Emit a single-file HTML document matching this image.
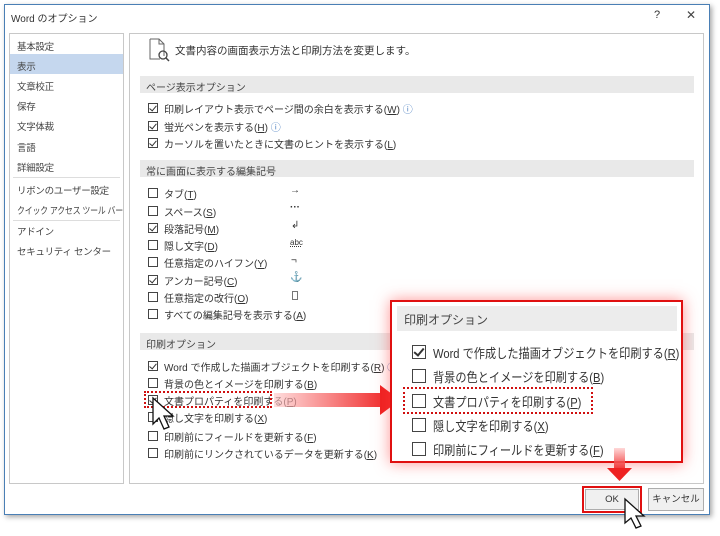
<!DOCTYPE html>
<html><head><meta charset="utf-8"><style>
*{margin:0;padding:0;box-sizing:border-box}
body{width:720px;height:536px;background:#fff;position:relative;overflow:hidden;font-family:"Liberation Sans","Noto Sans CJK JP",sans-serif;color:#333;font-size:10px}
.a{position:absolute;white-space:nowrap}
.dlg{left:4px;top:4px;width:706px;height:511px;border:1px solid #4a7fb5;background:#fff;box-shadow:2px 2px 5px rgba(0,0,0,.35)}
.pane{border:1px solid #c8c8c8;background:#fff}
.hdr{background:#e9e9e9;left:140px;width:554px;height:17px;padding:3px 0 0 6px;font-size:10px;color:#444}
.cb{width:10px;height:10px;border:1px solid #444;background:#fff}
.ck::after{content:"";position:absolute;left:2px;top:0px;width:3px;height:6px;border:solid #333;border-width:0 1.5px 1.5px 0;transform:rotate(40deg)}
.nav{left:17px;font-size:9.5px;letter-spacing:-0.3px;color:#444}
.big .cb{width:14px;height:14px;border:1.5px solid #444}
.big .ck::after{left:3px;top:0;width:4px;height:8px;border-width:0 2px 2px 0}
.bt{height:23px;border:1px solid #adadad;background:#f0f0f0;text-align:center;font-size:9.5px;line-height:21px}
.bx{font-size:13px;transform:scaleX(.86);transform-origin:left top}
</style></head><body>
<div class="a dlg"></div>
<div class="a" style="left:11px;top:10px;font-size:10px">Word のオプション</div>
<div class="a" style="left:654px;top:9px;font-size:11px">?</div>
<div class="a" style="left:686px;top:8px;font-size:12px;color:#444">✕</div>
<div class="a pane" style="left:9px;top:33px;width:115px;height:451px"></div>
<div class="a" style="left:10px;top:54px;width:113px;height:20px;background:#c5d7ee"></div>
<div class="a nav" style="top:39px">基本設定</div>
<div class="a nav" style="top:59px">表示</div>
<div class="a nav" style="top:79px">文章校正</div>
<div class="a nav" style="top:99px">保存</div>
<div class="a nav" style="top:119px">文字体裁</div>
<div class="a nav" style="top:140px">言語</div>
<div class="a nav" style="top:160px">詳細設定</div>
<div class="a" style="left:13px;top:177px;width:107px;height:1px;background:#ddd"></div>
<div class="a nav" style="top:183px">リボンのユーザー設定</div>
<div class="a nav" style="top:203px;transform:scaleX(.84);transform-origin:left top">クイック アクセス ツール バー</div>
<div class="a" style="left:13px;top:220px;width:107px;height:1px;background:#ddd"></div>
<div class="a nav" style="top:224px">アドイン</div>
<div class="a nav" style="top:244px">セキュリティ センター</div>
<div class="a pane" style="left:129px;top:33px;width:575px;height:451px"></div>
<svg class="a" style="left:148px;top:38px" width="22" height="24"><path d="M2 1h9l5 5v12M2 1v20h10M11 1v5h5" fill="none" stroke="#666"/><circle cx="15" cy="17" r="4" fill="none" stroke="#444" stroke-width="1.3"/><path d="M18 20l3 3" stroke="#444" stroke-width="1.5"/></svg>
<div class="a" style="left:175px;top:43px;font-size:10.5px">文書内容の画面表示方法と印刷方法を変更します。</div>

<div class="a hdr" style="top:76px">ページ表示オプション</div>
<div class="a cb ck" style="left:148px;top:103px"></div><div class="a" style="left:164px;top:101px">印刷レイアウト表示でページ間の余白を表示する(<u>W</u>) <span style="color:#4a7fc0">ⓘ</span></div>
<div class="a cb ck" style="left:148px;top:121px"></div><div class="a" style="left:164px;top:119px">蛍光ペンを表示する(<u>H</u>) <span style="color:#4a7fc0">ⓘ</span></div>
<div class="a cb ck" style="left:148px;top:138px"></div><div class="a" style="left:164px;top:136px">カーソルを置いたときに文書のヒントを表示する(<u>L</u>)</div>

<div class="a hdr" style="top:160px">常に画面に表示する編集記号</div>
<div class="a cb" style="left:148px;top:188px"></div><div class="a" style="left:164px;top:186px">タブ(<u>T</u>)</div><div class="a" style="left:290px;top:185px">→</div>
<div class="a cb" style="left:148px;top:206px"></div><div class="a" style="left:164px;top:204px">スペース(<u>S</u>)</div><div class="a" style="left:290px;top:202px;font-weight:bold">···</div>
<div class="a cb ck" style="left:148px;top:223px"></div><div class="a" style="left:164px;top:221px">段落記号(<u>M</u>)</div><div class="a" style="left:291px;top:220px">↲</div>
<div class="a cb" style="left:148px;top:240px"></div><div class="a" style="left:164px;top:238px">隠し文字(<u>D</u>)</div><div class="a" style="left:290px;top:238px;font-size:8px;text-decoration:underline dotted">abc</div>
<div class="a cb" style="left:148px;top:257px"></div><div class="a" style="left:164px;top:255px">任意指定のハイフン(<u>Y</u>)</div><div class="a" style="left:291px;top:255px">¬</div>
<div class="a cb ck" style="left:148px;top:275px"></div><div class="a" style="left:164px;top:273px">アンカー記号(<u>C</u>)</div><div class="a" style="left:290px;top:272px;font-weight:bold;color:#111">⚓</div>
<div class="a cb" style="left:148px;top:292px"></div><div class="a" style="left:164px;top:290px">任意指定の改行(<u>O</u>)</div><div class="a" style="left:292px;top:291px;width:6px;height:9px;border:1px solid #777"></div>
<div class="a cb" style="left:148px;top:309px"></div><div class="a" style="left:164px;top:307px">すべての編集記号を表示する(<u>A</u>)</div>

<div class="a hdr" style="top:333px">印刷オプション</div>
<div class="a cb ck" style="left:148px;top:361px"></div><div class="a" style="left:164px;top:359px">Word で作成した描画オブジェクトを印刷する(<u>R</u>) <span style="color:#4a7fc0">ⓘ</span></div>
<div class="a cb" style="left:148px;top:378px"></div><div class="a" style="left:164px;top:376px">背景の色とイメージを印刷する(<u>B</u>)</div>
<div class="a cb ck" style="left:148px;top:395px"></div><div class="a" style="left:164px;top:393px">文書プロパティを印刷する(<u>P</u>)</div>
<div class="a cb" style="left:148px;top:412px"></div><div class="a" style="left:164px;top:410px">隠し文字を印刷する(<u>X</u>)</div>
<div class="a cb" style="left:148px;top:431px"></div><div class="a" style="left:164px;top:429px">印刷前にフィールドを更新する(<u>F</u>)</div>
<div class="a cb" style="left:148px;top:448px"></div><div class="a" style="left:164px;top:446px">印刷前にリンクされているデータを更新する(<u>K</u>)</div>
<div class="a" style="left:144px;top:391px;width:128px;height:17px;border:2px dotted #d01010"></div>
<svg class="a" style="left:150px;top:396px" width="30" height="40"><path d="M3 2v26l6-6 5 11 5-2-5-11h9z" fill="#fff" stroke="#111" stroke-width="1.3"/></svg>

<div class="a" style="left:274px;top:393px;width:110px;height:14px;background:linear-gradient(to right,rgba(255,200,200,.6),#f03030)"></div>
<svg class="a" style="left:380px;top:385px" width="22" height="30"><path d="M0 0l20 15-20 15z" fill="#ee2222"/></svg>

<div class="a" style="left:390px;top:300px;width:293px;height:163px;border:2px solid #e01010;background:#fff;box-shadow:0 0 14px rgba(255,60,60,.55)"></div>
<div class="a" style="left:397px;top:306px;width:280px;height:25px;background:#ececec;font-size:12px;padding:5px 0 0 7px;color:#444">印刷オプション</div>
<div class="big">
<div class="a cb ck" style="left:412px;top:345px"></div><div class="a bx" style="left:433px;top:343px">Word で作成した描画オブジェクトを印刷する(<u>R</u>)</div>
<div class="a cb" style="left:412px;top:369px"></div><div class="a bx" style="left:433px;top:367px">背景の色とイメージを印刷する(<u>B</u>)</div>
<div class="a cb" style="left:412px;top:394px"></div><div class="a bx" style="left:433px;top:392px">文書プロパティを印刷する(<u>P</u>)</div>
<div class="a cb" style="left:412px;top:418px"></div><div class="a bx" style="left:433px;top:416px">隠し文字を印刷する(<u>X</u>)</div>
<div class="a cb" style="left:412px;top:442px"></div><div class="a bx" style="left:433px;top:440px">印刷前にフィールドを更新する(<u>F</u>)</div>
</div>
<div class="a" style="left:403px;top:387px;width:190px;height:27px;border:2px dotted #d01010"></div>

<div class="a" style="left:614px;top:448px;width:11px;height:22px;background:linear-gradient(to bottom,rgba(255,190,190,.6),#f03030)"></div>
<svg class="a" style="left:607px;top:468px" width="26" height="14"><path d="M0 0h25l-12.5 13z" fill="#ee2222"/></svg>
<div class="a" style="left:582px;top:486px;width:60px;height:27px;border:2px solid #e01010"></div>
<div class="a bt" style="left:585px;top:489px;width:54px;height:21px;line-height:19px">OK</div>
<div class="a bt" style="left:648px;top:488px;width:56px">キャンセル</div>
<svg class="a" style="left:622px;top:497px" width="26" height="36"><path d="M3 2v24l6-5 5 10 5-2-5-10h8z" fill="#fff" stroke="#111" stroke-width="1.3"/></svg>
</body></html>
